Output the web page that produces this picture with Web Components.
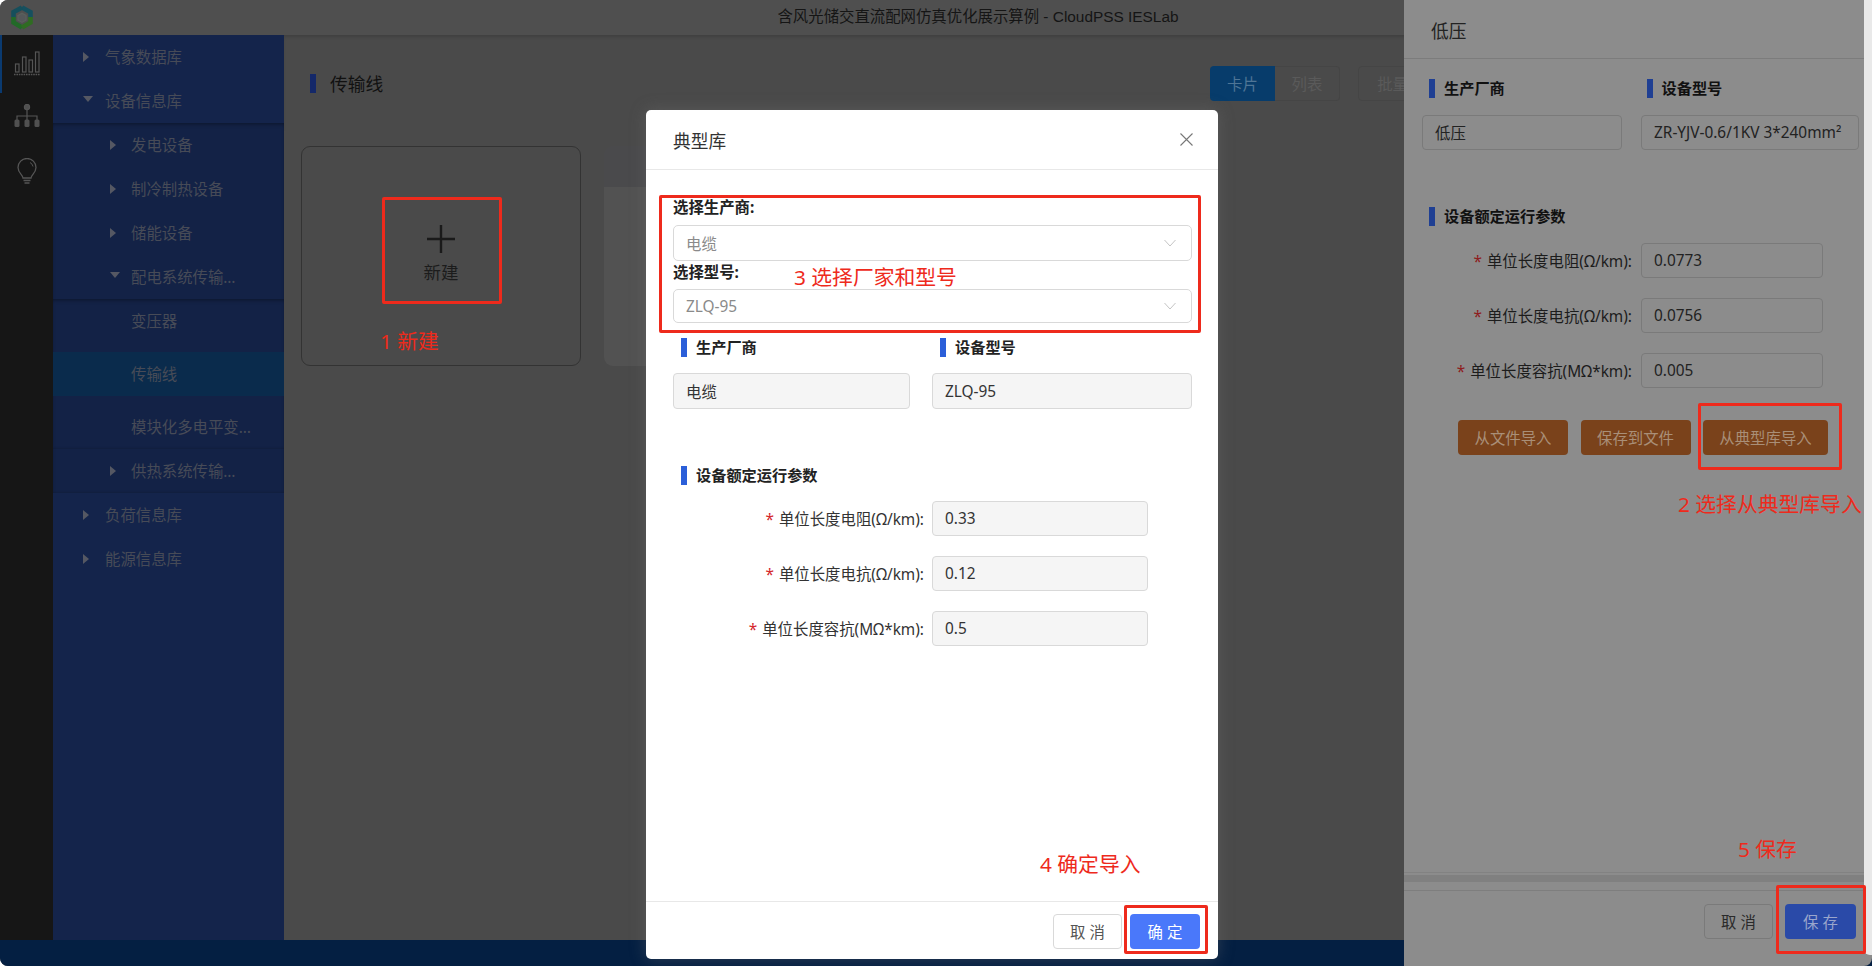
<!DOCTYPE html>
<html lang="zh-CN">
<head>
<meta charset="utf-8">
<title>典型库</title>
<style>
  html, body { margin: 0; height: 100%; background: #fff; overflow: hidden; }
  body { font: 15.4px "Noto Sans", "Noto Sans CJK SC", sans-serif; color: #222; }
  .themed-drawer {
    --bar: #1f3f93; --head: #111; --field-bg: transparent; --field-line: #7a7a7a;
    --field-text: #222; --label: #1c1c1c; --star: #8e1c20;
  }
</style>
</head>
<body>

<app-shell>
  <title-bar slot="top">含风光储交直流配网仿真优化展示算例 - CloudPSS IESLab</title-bar>
  <icon-rail slot="rail"></icon-rail>
  <side-nav slot="nav">
    <nav-item arrow="right" level="1">气象数据库</nav-item>
    <nav-item arrow="down" level="1">设备信息库</nav-item>
    <nav-group>
      <nav-item arrow="right" level="2">发电设备</nav-item>
      <nav-item arrow="right" level="2">制冷制热设备</nav-item>
      <nav-item arrow="right" level="2">储能设备</nav-item>
      <nav-item arrow="down" level="2">配电系统传输…</nav-item>
      <nav-group>
        <nav-item level="2" gap>变压器</nav-item>
        <nav-item level="2" gap selected>传输线</nav-item>
        <nav-item level="2">模块化多电平变…</nav-item>
      </nav-group>
      <nav-item arrow="right" level="2">供热系统传输…</nav-item>
    </nav-group>
    <nav-item arrow="right" level="1">负荷信息库</nav-item>
    <nav-item arrow="right" level="1">能源信息库</nav-item>
  </side-nav>
  <main-panel slot="main" heading="传输线"></main-panel>
</app-shell>

<side-drawer class="themed-drawer">
  <span slot="title">低压</span>
  <form-pair>
    <sec-head slot="a">生产厂商</sec-head>
    <sec-head slot="b">设备型号</sec-head>
  </form-pair>
  <field-pair>
    <text-box slot="a">低压</text-box>
    <text-box slot="b">ZR-YJV-0.6/1KV 3*240mm²</text-box>
  </field-pair>
  <sec-head style="margin:57px 0 17px 25px">设备额定运行参数</sec-head>
  <param-row style="--label-w:228px;--input-w:182px;--gap:9px" label="单位长度电阻(Ω/km):">0.0773</param-row>
  <param-row style="--label-w:228px;--input-w:182px;--gap:9px" label="单位长度电抗(Ω/km):">0.0756</param-row>
  <param-row style="--label-w:228px;--input-w:182px;--gap:9px" label="单位长度容抗(MΩ*km):">0.005</param-row>
  <action-row>
    <ui-button kind="brown" style="width:110px">从文件导入</ui-button>
    <ui-button kind="brown" style="width:110px">保存到文件</ui-button>
    <ui-button kind="brown" style="width:125px">从典型库导入</ui-button>
  </action-row>
  <ui-button slot="footer" kind="ghost" style="width:69px">取 消</ui-button>
  <ui-button slot="footer" kind="navy" style="width:71px">保 存</ui-button>
</side-drawer>

<modal-box>
  <span slot="title">典型库</span>
  <pick-label>选择生产商:</pick-label>
  <select-box style="height:36px;margin-top:5px">电缆</select-box>
  <pick-label>选择型号:</pick-label>
  <select-box style="height:34px;margin-top:4px">ZLQ-95</select-box>
  <modal-pair>
    <sec-head slot="a">生产厂商</sec-head>
    <sec-head slot="b">设备型号</sec-head>
    <text-box slot="c">电缆</text-box>
    <text-box slot="d">ZLQ-95</text-box>
  </modal-pair>
  <sec-head style="margin:57px 0 16px 8px">设备额定运行参数</sec-head>
  <param-row style="--label-w:251px" label="单位长度电阻(Ω/km):">0.33</param-row>
  <param-row style="--label-w:251px" label="单位长度电抗(Ω/km):">0.12</param-row>
  <param-row style="--label-w:251px" label="单位长度容抗(MΩ*km):">0.5</param-row>
  <ui-button slot="footer" kind="plain" style="width:69px">取 消</ui-button>
  <ui-button slot="footer" kind="primary" style="width:70px">确 定</ui-button>
</modal-box>

<!-- annotations drawn over the screenshot -->
<mark-box x="382" y="197" w="120" h="107"></mark-box>
<mark-box x="659" y="195" w="542" h="138"></mark-box>
<mark-box x="1124" y="905" w="84" h="49"></mark-box>
<mark-box x="1698" y="403" w="144" h="67"></mark-box>
<mark-box x="1776" y="885" w="90" h="69"></mark-box>
<step-note x="380" y="341">1 新建</step-note>
<step-note x="794" y="277">3 选择厂家和型号</step-note>
<step-note x="1040" y="864">4 确定导入</step-note>
<step-note x="1678" y="504">2 选择从典型库导入</step-note>
<step-note x="1738" y="849">5 保存</step-note>

<script>
/* eslint-env browser */
class ShadowBase extends HTMLElement {
  connectedCallback() {
    if (this.shadowRoot) {
      return;
    }
    this.attachShadow({mode: 'open'}).innerHTML = this.render();
  }
}

window.customElements.define('app-shell', class extends ShadowBase {
  render() {
    return `<style>
        :host {
          display: grid;
          grid-template: 35px 1fr 26px / 53px 231px 1fr;
          height: 100vh;
          overflow: hidden;
          border-radius: 8px 0 0 8px;
          background: #4a4a4a;
        }
        .top { grid-column: 1 / -1; }
        .status { grid-column: 1 / -1; background: #041f42; }
        slot { display: block; }
      </style>
      <div class="top"><slot name="top"></slot></div>
      <slot name="rail"></slot>
      <slot name="nav"></slot>
      <slot name="main"></slot>
      <div class="status"></div>`;
  }
});

window.customElements.define('title-bar', class extends ShadowBase {
  render() {
    return `<style>
        :host {
          display: block;
          position: relative;
          height: 35px;
          background: #4f4f4f;
          color: #151515;
          line-height: 34px;
          text-align: center;
          padding-left: 84px;
          box-sizing: border-box;
          font-family: "Liberation Sans", "Noto Sans CJK SC", sans-serif;
        }
        svg { position: absolute; left: 10px; top: 5px; }
      </style>
      <svg width="24" height="25" viewBox="0 0 24 25" fill="none" stroke-width="4.6">
        <path d="M12 2.5 20.5 7.2v5" stroke="#16505f"/>
        <path d="M12 2.5 3.5 7.2v5" stroke="#154f5c"/>
        <path d="M3.5 12v5.4l8.5 5" stroke="#226a28"/>
        <path d="M12 22.4l8.5-5V12" stroke="#2f6c22"/>
        <path d="M8 10.500l4-2.200 4 2.200v4.600l-4 2.200-4-2.200z" stroke="#5a5f5c" stroke-width="1.4" fill="#55585a"/>
      </svg>
      <slot></slot>`;
  }
});

window.customElements.define('icon-rail', class extends ShadowBase {
  render() {
    return `<style>
        :host {
          display: flex;
          flex-direction: column;
          align-items: center;
          height: 100%;
          background: #161616;
          position: relative;
        }
        .tick { position: absolute; left: 0; top: 0; width: 2px; height: 58px; background: #0a3a70; }
        svg { display: block; flex: none; fill: none; stroke: #555; }
      </style>
      <div class="tick"></div>
      <svg style="margin-top:16px" width="28" height="25" viewBox="0 0 28 25" stroke-width="1.2">
        <rect x="2.5" y="13" width="3.5" height="8"/>
        <rect x="9.5" y="6" width="3.5" height="15"/>
        <rect x="16" y="9" width="3.5" height="12"/>
        <rect x="22.5" y="1" width="3.5" height="20"/>
        <path d="M1 23.5h26" stroke-dasharray="1.6 .8" stroke-width="1.6"/>
      </svg>
      <svg style="margin-top:28px" width="28" height="25" viewBox="0 0 28 25" stroke-width="1.2">
        <circle cx="14" cy="3" r="2.6" fill="#505050"/>
        <path d="M14 5.500V16M4 16v-4h20v4"/>
        <rect x="1.500" y="15.500" width="5" height="7.500" rx="1.500" fill="#505050" stroke="none"/>
        <rect x="11.500" y="15.500" width="5" height="7.500" rx="1.500" fill="#505050" stroke="none"/>
        <rect x="21.500" y="15.500" width="5" height="7.500" rx="1.500" fill="#505050" stroke="none"/>
      </svg>
      <svg style="margin-top:29px" width="22" height="26" viewBox="0 0 22 26" stroke-width="1.3">
        <path d="M7 20c0-3-5-5-5-10.500a9 9 0 0 1 18 0C20 15 15 17 15 20z"/>
        <path d="M14 4.500a5.500 5.500 0 0 1 3 4" stroke-width="1"/>
        <path d="M7.500 22.500h7M8.500 25h5"/>
      </svg>`;
  }
});

window.customElements.define('side-nav', class extends ShadowBase {
  render() {
    return `<style>
        :host { display: block; height: 100%; background: #14244b; }
      </style><slot></slot>`;
  }
});

window.customElements.define('nav-group', class extends ShadowBase {
  render() {
    return `<style>
        :host {
          display: block;
          background: #132246;
          box-shadow: inset 0 3px 4px -2px rgba(0, 0, 0, .4), inset 0 -2px 3px -2px rgba(0, 0, 0, .25);
        }
      </style><slot></slot>`;
  }
});

window.customElements.define('nav-item', class extends ShadowBase {
  render() {
    const level = this.getAttribute('level');
    const arrow = this.getAttribute('arrow');
    const selected = this.hasAttribute('selected');
    const shape = arrow === 'right' ?
        'border-width:5.5px 0 5.5px 6px;border-color:transparent transparent transparent #555863;' :
        'border-width:6px 5px 0;border-color:#555863 transparent transparent;';
    return `<style>
        :host {
          display: flex;
          align-items: center;
          box-sizing: border-box;
          height: 44px;
          position: relative;
          padding: 0 0 2px ${level === '1' ? 52 : 78}px;
          color: #474b57;
          white-space: nowrap;
          ${selected ? 'background: #0a2b4c;' : ''}
          ${this.hasAttribute('gap') ? 'margin-bottom: 9px;' : ''}
        }
        i {
          position: absolute;
          left: ${level === '1' ? 30 : 57}px;
          top: 17px;
          width: 0;
          height: 0;
          border-style: solid;
          ${shape}
        }
      </style>
      ${arrow ? '<i></i>' : ''}<slot></slot>`;
  }
});

window.customElements.define('main-panel', class extends ShadowBase {
  render() {
    return `<style>
        :host { display: block; height: 100%; background: #4a4a4a; }
        header {
          display: flex;
          align-items: center;
          height: 96px;
          padding: 0 414px 0 26px;
          box-shadow: inset 0 3px 4px -2px rgba(0, 0, 0, .2);
        }
        .bar { width: 6px; height: 19px; background: #142869; margin-right: 14px; }
        h1 { margin: 0; font-size: 17.700px; font-weight: 400; color: #111; flex: 1; }
        .seg { display: flex; height: 35px; box-sizing: border-box; margin-right: 18px; color: #5a5a5a; }
        .seg span { display: flex; align-items: center; justify-content: center; width: 64px;
          border: 1px solid #454545; border-left: 0; border-radius: 0 4px 4px 0; }
        .seg .on { width: 65px; background: #073c6b; border: 0; border-radius: 4px 0 0 4px; color: #4f7596; }
        .batch { display: flex; align-items: center; justify-content: center; width: 100px; height: 35px;
          box-sizing: border-box; border: 1px solid #454545; border-radius: 4px; color: #5a5a5a; }
        .cards { display: flex; gap: 23px; padding: 15px 0 0 17px; }
        .card { width: 280px; height: 220px; box-sizing: border-box; border-radius: 9px; }
        .add { border: 1px solid #333; display: flex; flex-direction: column; align-items: center;
          color: #1c1c1c; font-size: 17.500px; }
        .add svg { margin-top: 78px; }
        .add span { margin-top: 7px; line-height: 24px; }
        .ghost { background: linear-gradient(#4a4a4c 0 41px, #525252 41px); }
      </style>
      <header>
        <div class="bar"></div>
        <h1>${this.getAttribute('heading')}</h1>
        <div class="seg"><span class="on">卡片</span><span>列表</span></div>
        <div class="batch">批量删除</div>
      </header>
      <div class="cards">
        <div class="card add">
          <svg width="28" height="28" viewBox="0 0 28 28" stroke="#1a1a1a" stroke-width="2.4">
            <path d="M14 0v28M0 14h28"/>
          </svg>
          <span>新建</span>
        </div>
        <div class="card ghost"></div>
      </div>`;
  }
});

window.customElements.define('sec-head', class extends ShadowBase {
  render() {
    return `<style>
        :host {
          display: flex;
          align-items: center;
          gap: 9px;
          height: 19px;
          font-weight: 700;
          font-size: 15.200px;
          color: var(--head, #222);
        }
        i { width: 6px; height: 19px; background: var(--bar, #2b5fd9); flex: none; }
        span { margin-top: -4px; }
      </style><i></i><span><slot></slot></span>`;
  }
});

window.customElements.define('text-box', class extends ShadowBase {
  render() {
    return `<style>
        :host {
          display: flex;
          align-items: center;
          box-sizing: border-box;
          height: 35px;
          padding: 0 12px;
          border: 1px solid var(--field-line, #d9d9d9);
          border-radius: 4px;
          background: var(--field-bg, #f5f5f5);
          color: var(--field-text, #333);
          white-space: nowrap;
        }
      </style><slot></slot>`;
  }
});

window.customElements.define('select-box', class extends ShadowBase {
  render() {
    return `<style>
        :host {
          display: flex;
          align-items: center;
          justify-content: space-between;
          box-sizing: border-box;
          padding: 0 15px 0 12px;
          border: 1px solid #d9d9d9;
          border-radius: 5px;
          background: #fff;
          color: #8a8a8a;
        }
      </style>
      <slot></slot>
      <svg width="12" height="8" viewBox="0 0 12 8" fill="none" stroke="#c4c4c4" stroke-width="1">
        <path d="M.5 1 6 7l5.500-6"/>
      </svg>`;
  }
});

window.customElements.define('pick-label', class extends ShadowBase {
  render() {
    return `<style>
        :host { display: block; height: 24px; line-height: 24px; font-weight: 700; font-size: 15.400px; color: #222; }
      </style><slot></slot>`;
  }
});

window.customElements.define('param-row', class extends ShadowBase {
  render() {
    return `<style>
        :host {
          display: grid;
          grid-template-columns: var(--label-w, 252px) var(--input-w, 216px);
          column-gap: var(--gap, 8px);
          align-items: center;
          margin-bottom: 20px;
          white-space: nowrap;
        }
        label { text-align: right; color: var(--label, #333); }
        b { color: var(--star, #d4262c); font-weight: 400; margin-right: 5px; }
      </style>
      <label><b>*</b>${this.getAttribute('label')}</label>
      <text-box><slot></slot></text-box>`;
  }
});

window.customElements.define('ui-button', class extends ShadowBase {
  render() {
    const kinds = {
      primary: 'background:#4a78fa;color:#fff;',
      plain: 'background:#fff;border:1px solid #d9d9d9;color:#555;',
      ghost: 'border:1px solid #7a7a7a;color:#2a2a2a;',
      navy: 'background:#2a4aa8;color:#9aa6cc;',
      brown: 'background:#7a421b;color:#a98f78;'
    };
    return `<style>
        :host {
          display: flex;
          align-items: center;
          justify-content: center;
          box-sizing: border-box;
          height: 34.500px;
          border-radius: 4px;
          white-space: nowrap;
          ${kinds[this.getAttribute('kind')]}
        }
      </style><slot></slot>`;
  }
});

window.customElements.define('form-pair', class extends ShadowBase {
  render() {
    return `<style>
        :host { display: flex; padding: 20px 0 0 25px; }
        ::slotted(sec-head) { width: 220px; }
      </style><slot name="a"></slot><slot name="b"></slot>`;
  }
});

window.customElements.define('field-pair', class extends ShadowBase {
  render() {
    return `<style>
        :host { display: grid; grid-template-columns: 200px 218px; column-gap: 19px;
          margin: 17px 0 0 18px; }
      </style><slot name="a"></slot><slot name="b"></slot>`;
  }
});

window.customElements.define('action-row', class extends ShadowBase {
  render() {
    return `<style>
        :host { display: flex; gap: 12.500px; margin: 32px 0 0 54px; }
      </style><slot></slot>`;
  }
});

window.customElements.define('modal-pair', class extends ShadowBase {
  render() {
    return `<style>
        :host { display: grid; grid-template-columns: 237px 260px; column-gap: 22px; row-gap: 16px;
          margin-top: 15px; }
        ::slotted(sec-head) { margin-left: 8px; }
        ::slotted(text-box) { height: 36px; }
      </style>
      <slot name="a"></slot><slot name="b"></slot><slot name="c"></slot><slot name="d"></slot>`;
  }
});

window.customElements.define('side-drawer', class extends ShadowBase {
  render() {
    return `<style>
        :host {
          position: absolute;
          left: 1404px;
          top: 0;
          width: 468px;
          height: 966px;
          display: grid;
          grid-template: 1fr / 460px 8px;
          background: #8c8c8c;
          border-radius: 0 0 8px 0;
          overflow: hidden;
        }
        .pane { display: flex; flex-direction: column; min-width: 0; }
        .title { height: 59px; box-sizing: border-box; flex: none; display: flex; align-items: center;
          padding: 2px 0 0 27px; border-bottom: 1px solid #7c7c7c; font-size: 17.700px; color: #222; }
        .body { flex: 1; }
        .band { flex: none; box-sizing: border-box; height: 19px; border-top: 1px solid #828282;
          border-bottom: 1px solid #7e7e7e; padding-top: 2px; }
        .band div { height: 7px; background: #808080; }
        .foot { flex: none; height: 75px; box-sizing: border-box; display: flex; justify-content: flex-end;
          gap: 12px; padding: 13px 8px 0 0; }
        .edge { height: 955px; background: #e9e9e9; border-radius: 0 0 0 6px; }
      </style>
      <div class="pane">
        <div class="title"><slot name="title"></slot></div>
        <div class="body"><slot></slot></div>
        <div class="band"><div></div></div>
        <div class="foot"><slot name="footer"></slot></div>
      </div>
      <div class="edge"></div>`;
  }
});

window.customElements.define('modal-box', class extends ShadowBase {
  render() {
    return `<style>
        :host {
          position: absolute;
          left: 646px;
          top: 110px;
          width: 572px;
          height: 849px;
          display: flex;
          flex-direction: column;
          background: #fff;
          border-radius: 5px;
          box-shadow: 0 0 16px rgba(120, 120, 120, .35);
        }
        .title { height: 60px; flex: none; box-sizing: border-box; display: flex; align-items: center;
          justify-content: space-between; padding: 0 25px 0 27px; border-bottom: 1px solid #e8e8e8;
          font-size: 17.700px; color: #333; }
        .body { flex: 1; padding: 26px 26px 0 27px; }
        .foot { flex: none; height: 58px; box-sizing: border-box; display: flex; justify-content: flex-end;
          gap: 8px; padding: 12px 18px 0 0; border-top: 1px solid #e8e8e8; }
      </style>
      <div class="title">
        <slot name="title"></slot>
        <svg width="13" height="13" viewBox="0 0 13 13" stroke="#777" stroke-width="1.100">
          <path d="M.5.5l12 12M12.500.5l-12 12"/>
        </svg>
      </div>
      <div class="body"><slot></slot></div>
      <div class="foot"><slot name="footer"></slot></div>`;
  }
});

window.customElements.define('mark-box', class extends ShadowBase {
  render() {
    const at = (name) => this.getAttribute(name) + 'px';
    return `<style>
        :host {
          position: absolute;
          left: ${at('x')};
          top: ${at('y')};
          width: ${at('w')};
          height: ${at('h')};
          box-sizing: border-box;
          border: 3px solid #ee2a1c;
          border-radius: 2px;
        }
      </style>`;
  }
});

window.customElements.define('step-note', class extends ShadowBase {
  render() {
    return `<style>
        :host {
          position: absolute;
          left: ${this.getAttribute('x')}px;
          top: ${this.getAttribute('y') - 15}px;
          line-height: 30px;
          font-size: 20.800px;
          color: #ee2a1c;
          white-space: nowrap;
        }
      </style><slot></slot>`;
  }
});
</script>
</body>
</html>
